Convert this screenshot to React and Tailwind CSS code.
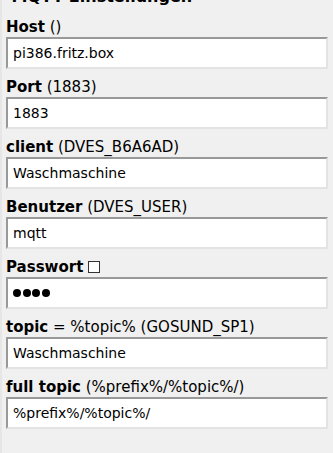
import React from "react";

const fields = [
  { bold: "Host", rest: " ()", value: "pi386.fritz.box" },
  { bold: "Port", rest: " (1883)", value: "1883" },
  { bold: "client", rest: " (DVES_B6A6AD)", value: "Waschmaschine" },
  { bold: "Benutzer", rest: " (DVES_USER)", value: "mqtt" },
  { bold: "Passwort", checkbox: true, password: true },
  { bold: "topic", rest: " = %topic% (GOSUND_SP1)", value: "Waschmaschine" },
  { bold: "full topic", rest: " (%prefix%/%topic%/)", value: "%prefix%/%topic%/" },
];

const boxCls =
  "h-[32px] w-full border-2 border-t-[#999] border-l-[#999] border-b-[#e3e3e3] border-r-[#e3e3e3] bg-white";

function Field({ f }) {
  return (
    <div className="mb-[8px]">
      <div className="h-[20px] leading-[21px] text-[15px] text-black whitespace-pre">
        <b className="font-bold">{f.bold}</b>
        {f.rest}
        {f.checkbox && (
          <span className="ml-[5px] inline-block align-[-1px] w-[12px] h-[12px] border border-[#333] bg-white" />
        )}
      </div>
      {f.password ? (
        <div className={boxCls + " flex items-center gap-[1.7px] pl-[5px]"}>
          <span className="w-[8px] h-[8px] rounded-full bg-black" />
          <span className="w-[8px] h-[8px] rounded-full bg-black" />
          <span className="w-[8px] h-[8px] rounded-full bg-black" />
          <span className="w-[8px] h-[8px] rounded-full bg-black" />
        </div>
      ) : (
        <input
          readOnly
          value={f.value}
          className={boxCls + " block px-[5px] text-[14px] text-black outline-none"}
        />
      )}
    </div>
  );
}

export default function App() {
  return (
    <div
      className="w-[333px] h-[453px] overflow-hidden bg-[#f0f0f0] border-l-2 border-l-[#e6e6e6]"
      style={{ fontFamily: '"DejaVu Sans", Verdana, sans-serif' }}
    >
      <div className="-mt-[13px] pl-[4px] pr-[5px]">
        <div className="h-[20px] leading-[20px] text-[16px] font-bold text-black mb-[10px] whitespace-pre">
          {"\u00a0MQTT Einstellungen\u00a0"}
        </div>
        {fields.map((f) => (
          <Field key={f.bold} f={f} />
        ))}
      </div>
    </div>
  );
}
